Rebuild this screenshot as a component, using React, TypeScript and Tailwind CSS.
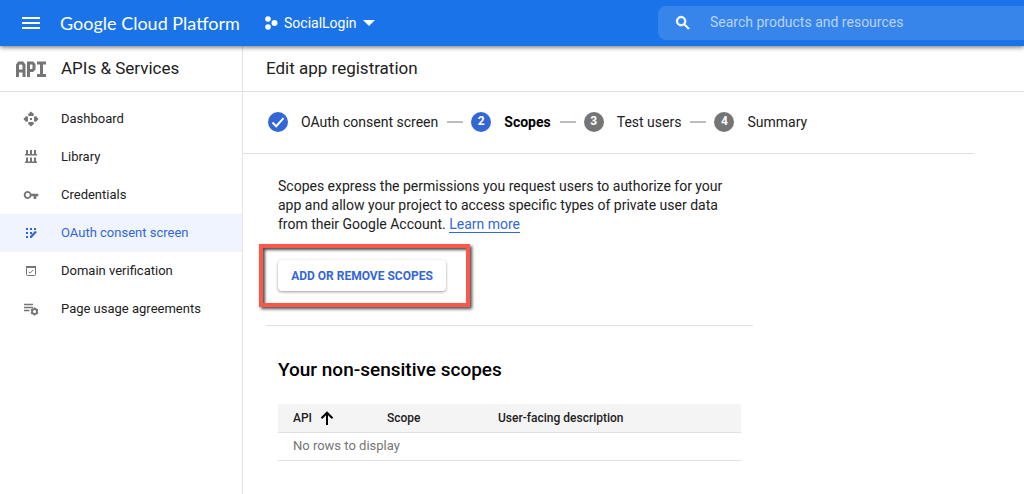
import type { ReactNode } from "react";

interface NavItem {
  label: string;
  icon: ReactNode;
  active?: boolean;
}

interface Step {
  label: string;
  state: "done" | "current" | "todo";
}

const navItems: NavItem[] = [
  {
    label: "Dashboard",
    icon: (
      <svg viewBox="0 0 16 16" className="size-4" fill="currentColor">
        <path d="M8 .4 10.8 3v1.500L9.800 5H6.200l-1-.5V3zM8 15.600 5.200 13v-1.500l1-.5h3.600l1 .5V13zM.4 8 3 5.200h1.500l.5 1v3.600l-.5 1H3zM15.600 8 13 10.800h-1.500l-.5-1V6.200l.5-1H13z" />
        <rect x="7" y="7" width="2" height="2" />
      </svg>
    ),
  },
  {
    label: "Library",
    icon: (
      <svg viewBox="0 0 16 16" className="size-4" fill="currentColor">
        <path d="M3 1h2v4H3zM7 1h2v4H7zM11 1h2v4h-2zM2 5h12v1.500H2zM3 8.500h2v4H3zM7 8.500h2v4H7zM11 8.500h2v4h-2zM2 12.500h12V14H2z" />
      </svg>
    ),
  },
  {
    label: "Credentials",
    icon: (
      <svg viewBox="0 0 24 24" className="size-4" fill="currentColor">
        <path d="M12.650 10A6 6 0 1 0 12.650 14H16v4h4v-4h3v-4zM7 15.200a3.200 3.200 0 1 1 0-6.400 3.200 3.200 0 0 1 0 6.400z" />
      </svg>
    ),
  },
  {
    label: "OAuth consent screen",
    active: true,
    icon: (
      <svg viewBox="0 0 16 16" className="size-4" fill="currentColor">
        <path d="M3 3h2v2H3zM7 3h2v2H7zM11 3h2v2h-2zM3 7h2v2H3zM7 7h2v2H7zM3 11h2v2H3zM7 13v-2l5-5 2 1-5.500 6z" />
      </svg>
    ),
  },
  {
    label: "Domain verification",
    icon: (
      <svg viewBox="0 0 16 16" className="size-4" fill="none" stroke="currentColor">
        <rect x="3.500" y="3.500" width="9" height="9" rx="1" />
        <path d="M3 4h10" strokeWidth="2" />
        <path d="m5.800 8.700 1.400 1.400 3-3.200" />
      </svg>
    ),
  },
  {
    label: "Page usage agreements",
    icon: (
      <svg viewBox="0 0 16 16" className="size-4" fill="none" stroke="currentColor">
        <path d="M1 3.500h9M1 6.500h9M1 9.500h5.500" strokeWidth="1.400" />
        <circle cx="11.500" cy="10.500" r="2.500" strokeWidth="1.800" />
        <path
          d="M11.500 6.500v1.500M11.500 13v1.500M8 8.500l1.300.7M13.700 11.800l1.300.7M8 12.500l1.300-.7M13.700 9.200l1.300-.7"
          strokeWidth="1.600"
        />
      </svg>
    ),
  },
];

const steps: Step[] = [
  { label: "OAuth consent screen", state: "done" },
  { label: "Scopes", state: "current" },
  { label: "Test users", state: "todo" },
  { label: "Summary", state: "todo" },
];

function Header() {
  return (
    <header className="relative z-10 flex h-[46px] items-center bg-[#1a73e8] text-white shadow-[0_1px_5px_rgba(0,0,0,0.6)]">
      <button type="button" aria-label="Navigation menu" className="ml-[22px] shrink-0">
        <svg viewBox="0 0 18 12" className="h-3 w-[18px]" fill="currentColor">
          <path d="M0 0h18v2H0zM0 5h18v2H0zM0 10h18v2H0z" />
        </svg>
      </button>
      <a
        href="#"
        className="ml-5 w-[184px] shrink-0 whitespace-nowrap font-['Lato',sans-serif] text-[18px] leading-6"
      >
        Google Cloud Platform
      </a>
      <button type="button" className="ml-5 flex shrink-0 items-center text-sm">
        <svg viewBox="0 0 14 14" className="mr-1.5 size-3.5" fill="currentColor">
          <circle cx="4" cy="3" r="2.800" />
          <circle cx="4" cy="11" r="2.800" />
          <circle cx="10.500" cy="7" r="3" />
        </svg>
        SocialLogin
        <svg viewBox="0 0 12 6" className="ml-1.5 h-1.5 w-3" fill="currentColor">
          <path d="M0 0h12L6 6z" />
        </svg>
      </button>
      <label className="ml-auto flex h-[34px] w-[366px] items-center rounded-l-lg bg-[#3784eb]">
        <svg viewBox="0 0 24 24" className="ml-4 size-[18px] shrink-0" fill="currentColor" stroke="currentColor">
          <path d="M15.500 14h-.79l-.28-.27A6.470 6.470 0 0 0 16 9.500 6.500 6.500 0 1 0 9.500 16c1.610 0 3.090-.59 4.230-1.570l.27.28v.79l5 4.990L20.490 19l-4.990-5zm-6 0C7.010 14 5 11.990 5 9.500S7.010 5 9.500 5 14 7.010 14 9.500 11.990 14 9.500 14z" />
        </svg>
        <input
          type="text"
          aria-label="Search products and resources"
          placeholder="Search products and resources"
          className="ml-[18px] min-w-0 flex-1 bg-transparent pb-0.5 text-sm placeholder:text-[#b8d4f8] focus:outline-none"
        />
      </label>
    </header>
  );
}

function Sidebar() {
  return (
    <aside className="w-[243px] shrink-0 border-r border-[#e4e4e4]">
      <div className="flex h-[46px] items-center border-b border-[#e0e0e0]">
        <svg viewBox="0 0 30 16" className="ml-4 h-4 w-[30px]" fill="none" stroke="#757575" strokeWidth="3">
          <path d="M1.500 16V4L3 2h3.500L8 4v12M1.500 10H8M12.500 16V2h4L18 3.500V8l-1.500 1.500h-4M21 2h9M25.500 2v12M21 14.500h9" />
        </svg>
        <h2 className="ml-[15px] text-[17px]">APIs &amp; Services</h2>
      </div>
      <nav className="pt-2">
        {navItems.map((item) => (
          <a
            key={item.label}
            href="#"
            aria-current={item.active ? "page" : undefined}
            className={
              item.active
                ? "flex h-[38px] items-center bg-[#eff4fe] pl-[23px] text-[13px] text-[#3367d6]"
                : "flex h-[38px] items-center pl-[23px] text-[13px]"
            }
          >
            <span className={item.active ? "mr-[22px]" : "mr-[22px] text-[#757575]"}>
              {item.icon}
            </span>
            {item.label}
          </a>
        ))}
      </nav>
    </aside>
  );
}

function Stepper() {
  return (
    <ol className="flex h-[62px] max-w-[731px] items-center border-b border-[#e0e0e0] pb-px pl-[25px] text-sm">
      {steps.map((step, i) => (
        <li key={step.label} className="flex items-center whitespace-nowrap">
          {i > 0 && <span className="ml-[9px] mr-2 h-0.5 w-4 bg-[#bdbdbd]" />}
          <span
            className={
              step.state === "todo"
                ? "mr-[13px] flex size-5 items-center justify-center rounded-full bg-[#757575] text-[12px] font-bold text-white"
                : "mr-[13px] flex size-5 items-center justify-center rounded-full bg-[#3367d6] text-[12px] font-bold text-white"
            }
          >
            {step.state === "done" ? (
              <svg viewBox="0 0 20 20" className="size-5" fill="none" stroke="currentColor" strokeWidth="2">
                <path d="m4.500 10.500 3.700 3.700 7.300-8" />
              </svg>
            ) : (
              i + 1
            )}
          </span>
          <span className={step.state === "current" ? "font-bold text-black" : ""}>
            {step.label}
          </span>
        </li>
      ))}
    </ol>
  );
}

function ScopesTable() {
  return (
    <table className="w-full text-left text-[12px]">
      <thead>
        <tr className="h-7 border-b border-[#e0e0e0] bg-[#f4f4f4]">
          <th className="w-[94px] pl-[15px] font-medium">
            <button type="button" className="flex items-center gap-2">
              API
              <svg viewBox="0 0 14 14" className="size-3.5" fill="none" stroke="#000" strokeWidth="2">
                <path d="M7 14V2M1.500 7.200 7 1.700l5.500 5.500" />
              </svg>
            </button>
          </th>
          <th className="w-[111px] pl-[15px] font-medium">Scope</th>
          <th className="pl-[15px] font-medium">User-facing description</th>
        </tr>
      </thead>
      <tbody>
        <tr className="h-7 border-b border-[#e0e0e0]">
          <td colSpan={3} className="pl-[15px] text-[13px] text-[#757575]">
            No rows to display
          </td>
        </tr>
      </tbody>
    </table>
  );
}

export default function App() {
  return (
    <div className="flex min-h-screen flex-col bg-white font-['Roboto',sans-serif] text-[#212121]">
      <Header />
      <div className="flex flex-1">
        <Sidebar />
        <main className="min-w-0 flex-1">
          <div className="flex h-[46px] items-center border-b border-[#e0e0e0] pl-[23px]">
            <h1 className="text-[17px]">Edit app registration</h1>
          </div>
          <Stepper />
          <div className="ml-[23px] max-w-[487px] px-3 pt-[23px]">
            <p className="text-sm leading-[19px]">
              Scopes express the permissions you request users to authorize for your
              app and allow your project to access specific types of private user data
              from their Google Account.{" "}
              <a href="#" className="border-b border-[#3367d6] text-[#3367d6]">
                Learn more
              </a>
            </p>
            <div className="-ml-[19px] mt-2.5 w-[211px] border-4 border-[#fa584b] px-[15px] py-3 shadow-[2px_2px_3px_rgba(0,0,0,0.7),inset_2px_2px_3px_rgba(0,0,0,0.7)]">
              <button
                type="button"
                className="h-[31px] w-[168px] rounded-sm bg-white text-[12px] font-bold text-[#3367d6] shadow-[0_1px_3px_rgba(0,0,0,0.4)]"
              >
                ADD OR REMOVE SCOPES
              </button>
            </div>
          </div>
          <section className="ml-[23px] mt-[18px] max-w-[487px] border-t border-[#e0e0e0] px-3 pt-8">
            <h2 className="mb-[22px] text-[19px] font-medium leading-6 text-black">
              Your non-sensitive scopes
            </h2>
            <ScopesTable />
          </section>
        </main>
      </div>
    </div>
  );
}
